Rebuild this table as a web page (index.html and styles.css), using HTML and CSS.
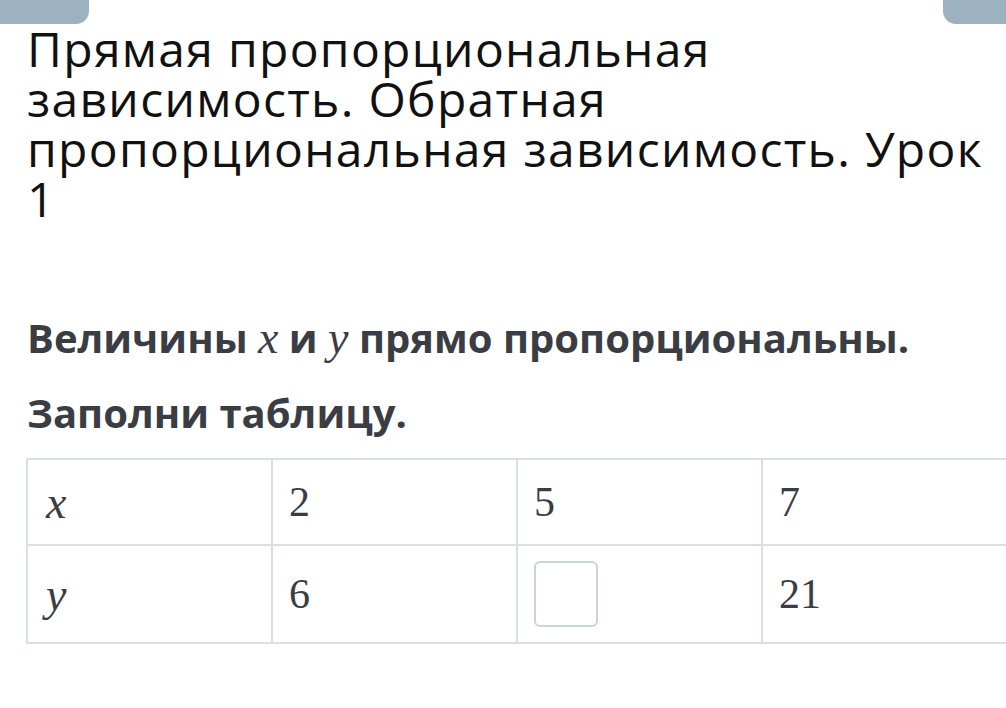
FILE: index.html
```html
<!DOCTYPE html>
<html lang="ru">
<head>
<meta charset="utf-8">
<link rel="stylesheet" href="styles.css">
</head>
<body>
<div class="topbar">
  <div class="tab tab-left"></div>
  <div class="tab tab-right"></div>
</div>
<main class="content">
  <h1 class="title">Прямая пропорциональная зависимость. Обратная пропорциональная зависимость. Урок 1</h1>
  <p class="task">Величины <span class="math">x</span> и <span class="math">y</span> прямо пропорциональны.</p>
  <p class="task">Заполни таблицу.</p>
  <table class="grid">
    <tr class="row-a">
      <td><span class="math">x</span></td>
      <td><span class="num">2</span></td>
      <td><span class="num">5</span></td>
      <td><span class="num">7</span></td>
    </tr>
    <tr class="row-b">
      <td><span class="math">y</span></td>
      <td><span class="num">6</span></td>
      <td><div class="answer"></div></td>
      <td><span class="num">21</span></td>
    </tr>
  </table>
</main>
</body>
</html>
```
FILE: styles.css
```css
html, body {
  margin: 0;
  padding: 0;
  background: #ffffff;
}
body {
  width: 1006px;
  height: 708px;
  overflow: hidden;
  font-family: "Open Sans", "Noto Sans", sans-serif;
}
.topbar {
  display: flex;
  justify-content: space-between;
  height: 24px;
}
.tab {
  background: #9db2c0;
  height: 24px;
}
.tab-left {
  width: 89px;
  border-bottom-right-radius: 13px;
}
.tab-right {
  width: 63px;
  border-bottom-left-radius: 13px;
}
.content {
  padding-left: 27px;
}
.title {
  margin: 0;
  font-weight: 400;
  font-size: 48px;
  line-height: 50px;
  letter-spacing: 1.3px;
  color: #111111;
  width: 975px;
}
.task {
  margin: 0;
  font-weight: 700;
  font-size: 40px;
  line-height: 50px;
  color: #3a3e44;
}
.title + .task {
  margin-top: 89px;
}
.task + .task {
  margin-top: 25px;
}
.math {
  font-family: "Liberation Serif", "DejaVu Serif", serif;
  font-style: italic;
  font-weight: 400;
  font-size: 46px;
}
.grid {
  margin: 20px 0 0 -1px;
  border-collapse: collapse;
  table-layout: fixed;
  width: 982px;
}
.grid td {
  border: 2px solid #dadfdf;
  width: 245px;
  padding: 0 16px;
  box-sizing: border-box;
  color: #3a3e44;
  font-family: "Liberation Serif", "DejaVu Serif", serif;
  font-size: 42px;
  vertical-align: middle;
}
.row-a td {
  height: 86px;
}
.row-b td {
  height: 98px;
}
.grid td:first-child {
  padding-left: 18px;
}
.grid .math {
  font-size: 46px;
}
.answer {
  width: 60px;
  height: 62px;
  border: 2px solid #ccd5d5;
  border-radius: 6px;
}
```
